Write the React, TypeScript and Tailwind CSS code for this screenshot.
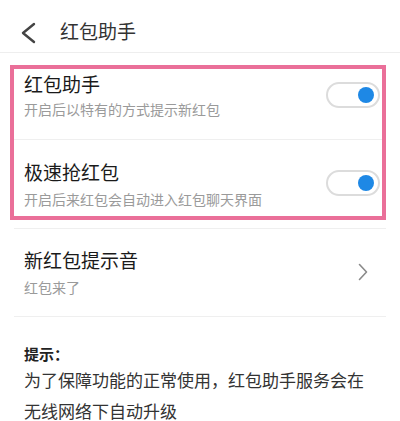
import React from "react";

function Toggle() {
  return (
    <div className="relative w-[54px] h-[26px] rounded-full border-2 border-[#dcdcdc] bg-white shrink-0">
      <div className="absolute right-[4px] top-[3px] w-[16px] h-[16px] rounded-full bg-[#1e88e5]" />
    </div>
  );
}

export default function App() {
  return (
    <div
      className="w-[400px] h-[421px] bg-white overflow-hidden"
      style={{ fontFamily: '"Noto Sans CJK SC", "Noto Sans", sans-serif' }}
    >
      {/* Header */}
      <div className="h-[53px] flex items-start border-b border-[#eeeeee]">
        <svg width="16" height="22" viewBox="0 0 16 22" className="ml-[21px] mt-[22px]">
          <polyline points="13,2 2,11 13,20" fill="none" stroke="#444" strokeWidth="2.4" strokeLinecap="round" strokeLinejoin="round" />
        </svg>
        <div className="ml-[23px] mt-[18px] text-[19px] leading-[26px] text-[#333]">红包助手</div>
      </div>

      {/* Pink highlighted box */}
      <div className="mt-[12px] ml-[10px] w-[376px] border-[4px] border-[#ea6f99]">
        <div className="flex items-start pl-[10px] pr-[2px] pt-[2px] pb-[20px] border-b border-[#efefef]">
          <div className="flex-1">
            <div className="text-[19px] leading-[26px] text-[#1a1a1a]">红包助手</div>
            <div className="mt-[2px] text-[14px] leading-[20px] text-[#9a9a9a]">开启后以特有的方式提示新红包</div>
          </div>
          <div className="mt-[11px]">
            <Toggle />
          </div>
        </div>
        <div className="flex items-start pl-[10px] pr-[2px] pt-[19px] pb-[7px]">
          <div className="flex-1">
            <div className="text-[19px] leading-[26px] text-[#1a1a1a]">极速抢红包</div>
            <div className="mt-[4px] text-[14px] leading-[20px] text-[#9a9a9a]">开启后来红包会自动进入红包聊天界面</div>
          </div>
          <div className="mt-[11px]">
            <Toggle />
          </div>
        </div>
      </div>

      {/* Line */}
      <div className="mt-[8px] mx-[14px] h-px bg-[#efefef]" />

      {/* Sound row */}
      <div className="flex items-center pl-[24px] pr-[32px] pt-[18px] pb-[19px]">
        <div className="flex-1">
          <div className="text-[19px] leading-[26px] text-[#1a1a1a]">新红包提示音</div>
          <div className="mt-[4px] text-[14px] leading-[20px] text-[#9a9a9a]">红包来了</div>
        </div>
        <svg width="10" height="18" viewBox="0 0 10 18">
          <polyline points="1.5,1.5 8.5,9 1.5,16.5" fill="none" stroke="#8a8a8a" strokeWidth="1.6" strokeLinecap="round" strokeLinejoin="round" />
        </svg>
      </div>

      <div className="mx-[14px] h-px bg-[#efefef]" />

      {/* Tips */}
      <div className="pl-[24px] pr-[20px] pt-[27px]">
        <div className="text-[15px] leading-[20px] font-bold text-[#222]">提示：</div>
        <div className="text-[17px] leading-[31px] text-[#333]">
          为了保障功能的正常使用，红包助手服务会在无线网络下自动升级
        </div>
      </div>
    </div>
  );
}
